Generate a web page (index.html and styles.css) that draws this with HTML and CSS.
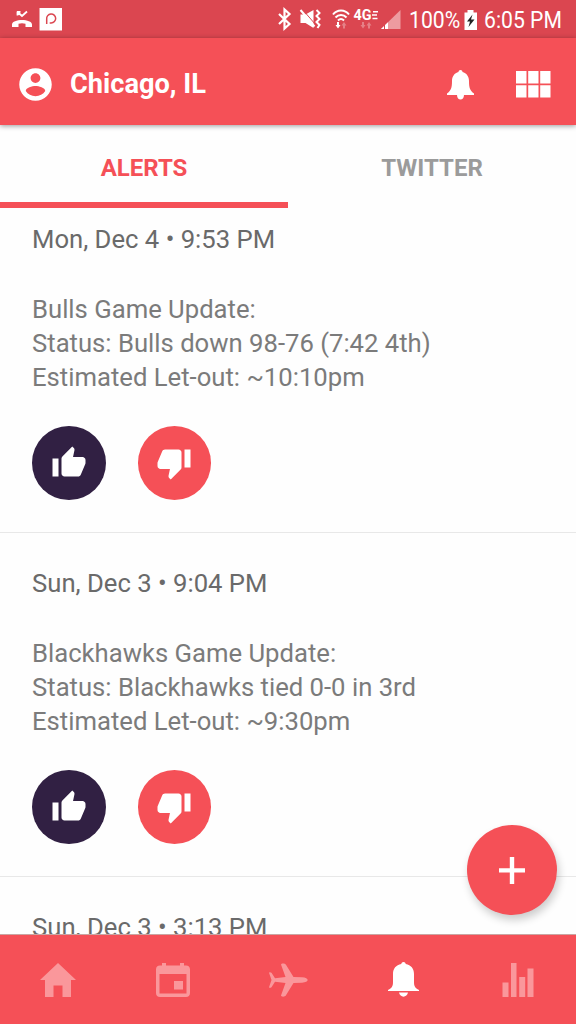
FILE: index.html
```html
<!DOCTYPE html>
<html lang="en">
<head>
    <meta charset="UTF-8">
    <meta name="viewport" content="width=device-width, initial-scale=1.0">
    <title>Alerts</title>
    <link rel="stylesheet" href="styles.css">
</head>
<body>

    <!-- Shared icons -->
    <svg class="sprite" xmlns="http://www.w3.org/2000/svg">
        <symbol id="thumb-up" viewBox="0 0 24 24">
            <path d="M1 21h4V9H1v12zm22-11c0-1.1-.9-2-2-2h-6.31l.95-4.57.03-.32c0-.41-.17-.79-.44-1.06L14.17 1 7.59 7.59C7.22 7.95 7 8.45 7 9v10c0 1.1.9 2 2 2h9c.83 0 1.54-.5 1.84-1.22l3.02-7.05c.09-.23.14-.47.14-.73v-2z"/>
        </symbol>
        <symbol id="thumb-down" viewBox="0 0 24 24">
            <path d="M15 3H6c-.83 0-1.54.5-1.84 1.22l-3.02 7.05c-.09.23-.14.47-.14.73v2c0 1.1.9 2 2 2h6.31l-.95 4.57-.03.32c0 .41.17.79.44 1.06L9.83 23l6.59-6.59c.36-.36.58-.86.58-1.41V5c0-1.1-.9-2-2-2zm4 0v12h4V3h-4z"/>
        </symbol>
    </svg>

    <!-- Status bar -->
    <div class="status-bar">
        <svg class="status-left" width="60" height="38" viewBox="0 0 60 38">
            <path d="M12 27v-2.500c0-6 20-6 20 0V27h-6.500v-3.300c-2.500-.7-4.500-.7-7 0V27z" fill="#fff"/>
            <path d="M17.500 11.500v4M17 11.800h3.500M17.500 12l4.500 4 5-4.500" fill="none" stroke="#fff" stroke-width="1.800"/>
            <path d="M39.500 8h22.500v22.500H39.500z" fill="#fff"/>
            <path d="M46.700 24v-5a4.500 4.500 0 1 1 4.500 4h-1.500" fill="none" stroke="#db4650" stroke-width="1.500"/>
        </svg>
        <svg class="status-right" width="130" height="38" viewBox="275 0 130 38">
            <path d="M279 14l10.500 10-5 4.500V9.500l5 4.500L279 24" fill="none" stroke="#fff" stroke-width="2.200"/>
            <path d="M300.500 14.500h5l8-4.500v18l-8-5h-5z" fill="#fff"/>
            <path d="M302.500 9.500l13 15" stroke="#db4650" stroke-width="1"/>
            <path d="M300.500 10l14 16.500M316.500 10l3 3-3 3 3 3-3 3 3 3-2 3" fill="none" stroke="#fff" stroke-width="2"/>
            <path d="M333 14.500c4-5.500 12-5.500 16 0M335.500 17.500c3-3.500 8-3.500 11 0M338 20.500c2-2 4-2 6 0" fill="none" stroke="#fff" stroke-width="2"/>
            <path d="M337 22h2v3h1.500l-2.500 3.500-2.500-3.500h1.500z" fill="#fff"/>
            <path d="M343 28.500v-3h-1.500l2.500-3.500 2.500 3.500h-1.500v3zM362 22h2v3h1.500l-2.500 3.500-2.500-3.500h1.500zM368 28.500v-3h-1.500l2.500-3.500 2.500 3.500h-1.500v3z" fill="#e58086"/>
            <text class="network" x="353.500" y="20" textLength="18" lengthAdjust="spacingAndGlyphs">4G</text>
            <path d="M373 11.700h5M372 15h5M372.500 18.500h5" stroke="#fff" stroke-width="1.600"/>
            <path d="M400.500 10v19h-19.500z" fill="#ed9ba0"/>
            <path d="M388 22.200V29h-7z" fill="#fff"/>
            <path d="M384.500 25v4" stroke="#db4650"/>
        </svg>
        <span class="percent">100%</span>
        <svg class="battery" width="14" height="20" viewBox="0 0 14 20">
            <path d="M3.500 0h6v2.500H13V20H.5V2.500h3z" fill="#fff"/>
            <path d="M8.500 4.500L3 11.500h3l-1.500 5.500 6-7.500h-3.500z" fill="#222"/>
        </svg>
        <span class="clock">6:05 PM</span>
    </div>

    <!-- App bar -->
    <header class="app-bar">
        <svg class="account" width="39" height="39" viewBox="0 0 24 24">
            <path d="M12 2C6.480 2 2 6.480 2 12s4.480 10 10 10 10-4.480 10-10S17.520 2 12 2zm0 3c1.660 0 3 1.340 3 3s-1.340 3-3 3-3-1.340-3-3 1.340-3 3-3zm0 14.200c-2.500 0-4.710-1.280-6-3.220.03-1.990 4-3.080 6-3.080 1.990 0 5.970 1.090 6 3.080-1.290 1.940-3.500 3.220-6 3.220z"/>
        </svg>
        <h1>Chicago, IL</h1>
        <svg class="bell" width="27" height="30" viewBox="0 0 27 30">
            <path d="M13.500 0c1.500 0 2 1 2 2 4 1 6.500 4.500 6.500 9 0 7 1 9.500 5 12.500V25H17c0 6-7 6-7 0H0v-1.500C4 20.500 5 18 5 11c0-4.500 2.500-8 6.500-9 0-1 .5-2 2-2z"/>
        </svg>
        <svg class="grid" width="35" height="27" viewBox="0 0 35 27">
            <path d="M0 0h10.500v12.500H0zM12.200 0h10.300v12.500H12.200zM24.200 0h10.300v12.500H24.200zM0 14.200h10.500v12.300H0zM12.200 14.200h10.300v12.300H12.200zM24.200 14.200h10.300v12.300H24.200z"/>
        </svg>
    </header>

    <!-- Tabs -->
    <nav class="tabs">
        <a class="tab active">ALERTS</a>
        <a class="tab">TWITTER</a>
    </nav>

    <!-- Alert feed -->
    <main class="feed">
        <article class="alert">
            <div class="date">Mon, Dec 4 • 9:53 PM</div>
            <p>Bulls Game Update:<br>Status: Bulls down 98-76 (7:42 4th)<br>Estimated Let-out: ~10:10pm</p>
            <div class="votes">
                <button class="vote up"><svg><use href="#thumb-up"/></svg></button>
                <button class="vote down"><svg><use href="#thumb-down"/></svg></button>
            </div>
        </article>
        <article class="alert">
            <div class="date">Sun, Dec 3 • 9:04 PM</div>
            <p>Blackhawks Game Update:<br>Status: Blackhawks tied 0-0 in 3rd<br>Estimated Let-out: ~9:30pm</p>
            <div class="votes">
                <button class="vote up"><svg><use href="#thumb-up"/></svg></button>
                <button class="vote down"><svg><use href="#thumb-down"/></svg></button>
            </div>
        </article>
        <article class="alert">
            <div class="date">Sun, Dec 3 • 3:13 PM</div>
        </article>
    </main>

    <button class="fab">
        <svg width="26" height="27" viewBox="0 0 26 27">
            <path d="M10.800 0h4.400v11.200H26v4.200H15.200V27h-4.400V15.400H0v-4.200h10.800z"/>
        </svg>
    </button>

    <!-- Bottom navigation -->
    <footer class="bottom-nav">
        <a><svg width="36" height="34" viewBox="0 0 36 34">
            <path d="M18 0l18 17h-5v17h-8.500V22.500h-9V34H5V17H0z"/>
        </svg></a>
        <a><svg width="34" height="34" viewBox="0 0 34 34">
            <path fill-rule="evenodd" d="M6 0h4v2.500h14V0h4v2.500h2c2.500 0 4 1.500 4 4V30c0 2.500-1.500 4-4 4H4c-2.500 0-4-1.500-4-4V6.500c0-2.500 1.500-4 4-4h2zM3.500 11v19.500h27V11zM18 18h9v8.500h-9z"/>
        </svg></a>
        <a><svg width="40" height="34" viewBox="0 0 40 34">
            <path d="M13 1.500c0-1.500 4-1.500 4.800 0L25.500 14l8.500.3c7.500.4 7.500 5 0 5.400l-8.500.3-7.700 12.500c-.8 1.500-4.800 1.500-4.800 0L17.500 20 7 18.800l-3.500 5.500c-.8.700-2.500.7-2.500 0L3.500 17 1 9.700c0-.7 1.700-.7 2.500 0L7 15.200 17.500 14z"/>
        </svg></a>
        <a class="current"><svg width="31" height="35" viewBox="0 0 31 35">
            <path d="M15.500 0c1.500 0 2.200 1 2.200 2 5.300 1 8.300 4.500 8.300 10v8c0 4 1 6 5 8v1H0v-1c4-2 5-4 5-8v-8c0-5.500 3-9 8.300-10 0-1 .7-2 2.200-2zM11 30.500h9c-1 5.500-8 5.500-9 0z"/>
        </svg></a>
        <a><svg width="32" height="34" viewBox="0 0 32 34">
            <path d="M.5 19.500h6V34h-6zM9 0h5.500v34H9zM17.200 14h6v20h-6zM25.500 5.500h6V34h-6z"/>
        </svg></a>
    </footer>

</body>
</html>
```
FILE: styles.css
```css
/* General styling */
* {
    box-sizing: border-box;
}

body {
    font-family: Roboto, sans-serif;
    background-color: #fefefe;
    color: #7b7b7b;
    margin: 0;
    height: 1024px;
    display: flex;
    flex-direction: column;
    overflow: hidden;
    position: relative;
}

svg {
    fill: currentColor;
    display: block;
    flex: none;
}

button {
    border: none;
    padding: 0;
    border-radius: 50%;
    color: #fff;
    display: flex;
    align-items: center;
    justify-content: center;
}

.sprite {
    display: none;
}

/* Status bar */
.status-bar {
    height: 38px;
    flex: none;
    background-color: #db4650;
    color: #fff;
    display: flex;
    align-items: center;
    font-size: 23px;
    line-height: 38px;
}

.status-left {
    overflow: visible;
}

.status-right {
    margin-left: 215px;
}

.network {
    font-size: 14px;
    font-weight: 700;
    fill: #fff;
}

.percent,
.clock {
    padding-top: 4px;
    white-space: nowrap;
    transform: scaleX(0.92);
    transform-origin: left;
}

.percent {
    width: 55px;
    margin-left: 4px;
}

.battery {
    margin-top: 1px;
}

.clock {
    margin-left: 6px;
}

/* App bar */
.app-bar {
    height: 87px;
    flex: none;
    background-color: #f55057;
    color: #fff;
    display: flex;
    align-items: center;
    padding: 6px 25px 0 16px;
    box-shadow: 0 1px 5px rgba(0, 0, 0, 0.4);
    z-index: 2;
}

.app-bar h1 {
    flex: 1;
    margin: 0 0 1px 15px;
    font-size: 27.2px;
    font-weight: 700;
}

.app-bar .grid {
    margin-left: 42px;
    margin-bottom: 1px;
}

/* Tabs */
.tabs {
    height: 83px;
    flex: none;
    display: flex;
    background-color: #fefefe;
    z-index: 1;
}

.tab {
    flex: 1;
    text-align: center;
    font-size: 24px;
    font-weight: 700;
    line-height: 86px;
    color: #9b9b9b;
}

.tab.active {
    color: #f55057;
    border-bottom: 6px solid #f55057;
}

/* Alert feed, scrolled a little under the tabs */
.feed {
    flex: 1;
    min-height: 0;
    overflow: hidden;
}

.alert {
    height: 344px;
    padding: 33px 32px 0;
    border-bottom: 1px solid #e8e8e8;
    font-size: 25.66px;
    line-height: 34px;
}

.alert:first-child {
    margin-top: -19px;
}

.date {
    color: #6a6a6a;
}

.alert p {
    margin: 36px 0 32px;
}

.votes {
    display: flex;
    gap: 32px;
}

.vote {
    width: 73.6px;
    height: 74px;
}

.vote svg {
    width: 36px;
    height: 36px;
}

.vote.up {
    background-color: #312043;
}

.vote.down {
    background-color: #f55057;
}

/* Floating add button */
.fab {
    position: absolute;
    right: 19px;
    bottom: 109px;
    width: 90px;
    height: 90px;
    background-color: #f55057;
    box-shadow: 2px 5px 9px rgba(0, 0, 0, 0.2);
}

/* Bottom navigation */
.bottom-nav {
    height: 90px;
    flex: none;
    border-top: 1px solid #c9a5a2;
    background-color: #f55057;
    display: flex;
}

.bottom-nav a {
    flex: 1;
    display: flex;
    align-items: center;
    justify-content: center;
    color: #fa979b;
}

.bottom-nav .current {
    color: #fff;
}
```
